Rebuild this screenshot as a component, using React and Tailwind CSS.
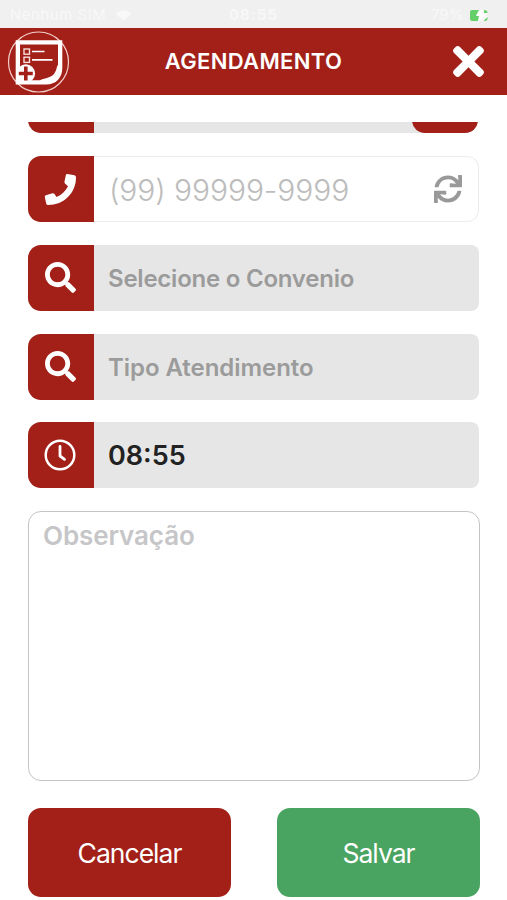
import { FaSearch, FaSync, FaTimes } from 'react-icons/fa'

function Logo() {
  return (
    <svg width="64" height="64" viewBox="0 0 64 64" fill="none">
      <circle cx="31.5" cy="32" r="30" stroke="#f3cfcb" strokeWidth="1.2" />
      <path d="M8.7 10.2H55.3V38C55.3 48 49 54.5 39 54.5H8.7Z" fill="#fff" />
      <path d="M13 14.5H51V35C49.5 36 50 40 47 44C43 48.500 37 48 33 50.3H13Z" fill="#a22018" />
      <rect x="17" y="19" width="5.5" height="5.2" stroke="#f6dedb" strokeWidth="1.4" />
      <rect x="17" y="27.2" width="5.5" height="5.2" stroke="#f6dedb" strokeWidth="1.4" />
      <path d="M25 21.5H37.5M25 29.8H45.5" stroke="#fff" strokeWidth="1.7" />
      <circle cx="18.8" cy="43.5" r="9.3" fill="#fff" />
      <path d="M18.800 36.5V50.5M11.8 43.5H25.800" stroke="#a22018" strokeWidth="3.6" />
    </svg>
  )
}

function PhoneIcon() {
  return (
    <svg width="32" height="32" viewBox="0 0 32 32" fill="currentColor">
      <path d="M23.500 1L30.500 2.300Q32 2.600 32 4.500C32 20 20 32 4 32Q2.500 32 2.200 30.500L0.800 24Q0.500 22.600 1.900 22.200L8.500 20.200Q9.700 19.900 10.500 21L12.500 24C17.500 22 21.500 18.500 24 13.300L21.200 10.700Q20.200 9.800 20.500 8.500L21.800 2.200Q22.100 0.800 23.500 1Z" />
    </svg>
  )
}

function ClockIcon() {
  return (
    <svg width="32" height="32" viewBox="0 0 32 32" fill="none" stroke="currentColor" strokeLinecap="round" strokeLinejoin="round">
      <circle cx="16" cy="16" r="14.3" strokeWidth="2.5" />
      <path d="M16 7.5V17L20.5 20.3" strokeWidth="2.8" />
    </svg>
  )
}

function StatusBar() {
  return (
    <div className="flex h-7 shrink-0 items-center bg-[#f0f0f0] pt-0.5 text-[15px] text-[#f8f8f8]">
      <div className="flex w-[229px] items-center gap-2.5 pl-2.5">
        <span className="tracking-[0.5px]">Nenhum SIM</span>
        <svg width="15" height="11" viewBox="0 0 15 11" fill="currentColor">
          <path d="M0 4C4-1 11-1 15 4L7.5 11Z" />
        </svg>
      </div>
      <span className="w-[202px] font-semibold tracking-[1.2px]">08:55</span>
      <span className="w-[38px]">79%</span>
      <svg width="21" height="13" viewBox="0 0 21 13">
        <rect x="1" y="1" width="17" height="11" rx="2.5" fill="#f8f8f8" />
        <path d="M3 1H10L7 6.5H10L9 12H3Q1 12 1 10V3Q1 1 3 1Z" fill="#65cf69" />
        <path d="M15 1Q18.500 1 18.500 4H15ZM14.500 12L18.500 8V10Q18.500 12 16 12Z" fill="#65cf69" />
        <path d="M13 0L7 7H11L9 13L16 5.5H12Z" fill="#fff" />
      </svg>
    </div>
  )
}

function Header() {
  return (
    <header className="flex h-[67px] shrink-0 items-center justify-between bg-[#a22018] pr-4 pl-[7px] text-white">
      <Logo />
      <h1 className="pr-2.5 text-[22px] font-semibold tracking-[0.35px]">AGENDAMENTO</h1>
      <FaTimes size={45} />
    </header>
  )
}

function Field({ icon, children }) {
  return (
    <div className="flex h-[66px] shrink-0 overflow-hidden rounded-l-[13px] rounded-r-lg bg-[#e6e6e6]">
      <div className="flex w-[66px] items-center justify-center bg-[#a22018] pr-0.5 text-white">{icon}</div>
      <div className="flex flex-1 items-center pt-0.5 pl-3.5">{children}</div>
    </div>
  )
}

function PhoneField() {
  return (
    <div className="flex h-[66px] shrink-0">
      <div className="flex w-[66px] items-center justify-center rounded-l-[13px] bg-[#a22018] pr-0.5 text-white">
        <PhoneIcon />
      </div>
      <div className="flex flex-1 items-center justify-between rounded-r-xl border-y-[1.5px] border-r-[1.5px] border-[#ececec] pr-4 pl-[15px]">
        <span className="pt-0.5 text-[30px] font-light tracking-[-0.08px] text-[#bcbcbc]">(99) 99999-9999</span>
        <FaSync size={28} className="text-[#999]" />
      </div>
    </div>
  )
}

export default function App() {
  return (
    <div className="flex h-[900px] w-full flex-col overflow-hidden bg-white font-['Inter',sans-serif]">
      <StatusBar />
      <Header />
      <main className="mt-[27px] flex flex-col pr-[27px] pl-7">
        {/* field scrolled under the header */}
        <div className="mr-px flex h-[11px] items-end overflow-hidden">
          <div className="flex h-[66px] w-[450px] shrink-0 justify-between rounded-[13px] bg-[#e6e6e6]">
            <div className="w-[66px] rounded-l-[13px] bg-[#a22018]" />
            <div className="w-[66px] rounded-[13px] bg-[#a22018]" />
          </div>
        </div>
        <div className="mt-[23px] mr-px flex flex-col gap-[22.8px]">
          <PhoneField />
          <Field icon={<FaSearch size={31} />}>
            <span className="text-2xl font-semibold tracking-[-0.23px] text-[#9b9b9b]">Selecione o Convenio</span>
          </Field>
          <Field icon={<FaSearch size={31} />}>
            <span className="text-2xl font-semibold tracking-[-0.05px] text-[#9b9b9b]">Tipo Atendimento</span>
          </Field>
          <Field icon={<ClockIcon />}>
            <span className="text-[27px] font-semibold text-[#222]">08:55</span>
          </Field>
        </div>
        <div className="mt-[22.6px] h-[270px] rounded-[13px] border-[1.5px] border-[#c4c4c4] px-3.5 pt-1.5">
          <span className="text-[26px] leading-9 font-semibold tracking-[-0.1px] text-[#c6c6c9]">Observação</span>
        </div>
        <div className="mt-[27px] flex justify-between text-[26.5px] tracking-[-1px] text-white">
          <button className="h-[89px] w-[203px] rounded-[13px] bg-[#a22018] pt-0.5">Cancelar</button>
          <button className="h-[89px] w-[203px] rounded-[13px] bg-[#4aa461] pt-0.5">Salvar</button>
        </div>
      </main>
    </div>
  )
}
